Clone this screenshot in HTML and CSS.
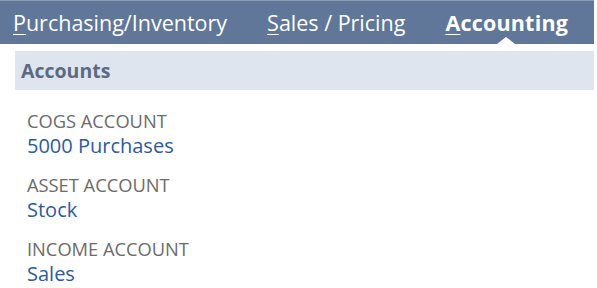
FILE: index.html
```html
<!DOCTYPE html>
<html>
<head>
	<meta charset="utf-8">
	<title>Accounting</title>
	<link rel="stylesheet" href="styles.css">
</head>
<body>

<div id="tabs">
	<span class="tab"><u>P</u>urchasing/Inventory</span>
	<span class="tab"><u>S</u>ales / Pricing</span>
	<span class="tab active"><u>A</u>ccounting</span>
</div>

<div id="section">
	<div class="section-head">Accounts</div>
	<div class="fields">
		<div class="field">
			<div class="label">COGS ACCOUNT</div>
			<div class="value">5000 Purchases</div>
		</div>
		<div class="field">
			<div class="label">ASSET ACCOUNT</div>
			<div class="value">Stock</div>
		</div>
		<div class="field">
			<div class="label">INCOME ACCOUNT</div>
			<div class="value">Sales</div>
		</div>
	</div>
</div>

</body>
</html>
```

FILE: styles.css
```css
* {
	margin: 0;
	padding: 0;
}
body {
	background: #fff;
	font-family: "Open Sans", "Liberation Sans", sans-serif;
	width: 594px;
}
#tabs {
	display: flex;
	gap: 40px;
	height: 43px;
	padding-left: 13px;
	background: #607799;
	border-top: 1px solid #8a9bb6;
	color: #fff;
	font-size: 21.5px;
	line-height: 43px;
}
#tabs u {
	text-underline-offset: 3px;
	text-decoration-thickness: 1px;
}
.tab.active {
	position: relative;
	font-weight: bold;
	letter-spacing: 0.2px;
}
.tab.active::after {
	content: "";
	position: absolute;
	left: 52px;
	bottom: 0;
	border-left: 9px solid transparent;
	border-right: 9px solid transparent;
	border-bottom: 7px solid #fff;
}
#section {
	padding: 7px 0 0 15px;
}
.section-head {
	height: 39px;
	line-height: 39px;
	padding-left: 6px;
	background: #dfe5ee;
	color: #5b6a84;
	font-size: 19.5px;
	font-weight: bold;
}
.fields {
	padding: 18px 0 0 12px;
}
.field {
	height: 64px;
}
.label {
	color: #6b6b6b;
	font-size: 18.3px;
	line-height: 25px;
}
.value {
	color: #2d5a9e;
	font-size: 20px;
	line-height: 25px;
}
```
